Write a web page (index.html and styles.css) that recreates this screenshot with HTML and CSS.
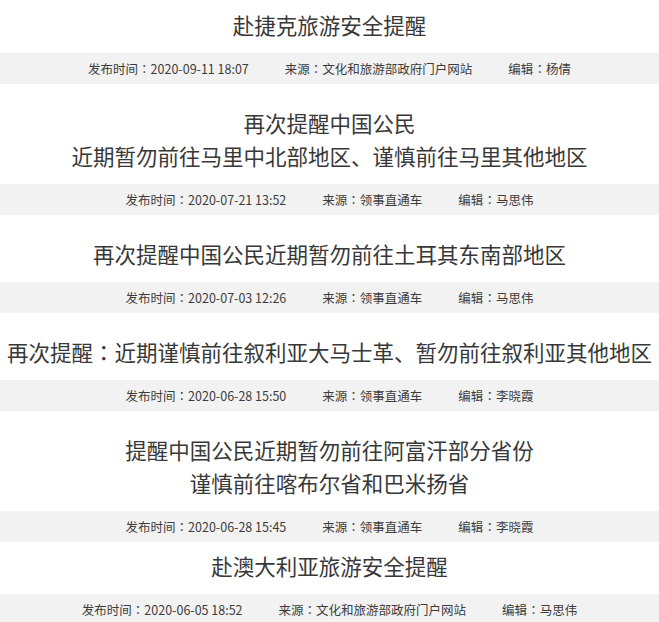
FILE: index.html
```html
<!DOCTYPE html>
<html lang="zh-CN">
<head>
<meta charset="utf-8">
<title>旅游安全提醒</title>
<link rel="stylesheet" href="styles.css">
</head>
<body>
<ul class="list">
  <li class="item item-first">
    <h2 class="title">赴捷克旅游安全提醒</h2>
    <div class="meta"><span>发布时间<span class="colon" lang="zh-TW">：</span>2020-09-11 18:07</span><span>来源<span class="colon" lang="zh-TW">：</span>文化和旅游部政府门户网站</span><span>编辑<span class="colon" lang="zh-TW">：</span>杨倩</span></div>
  </li>
  <li class="item">
    <h2 class="title">再次提醒中国公民<br>近期暂勿前往马里中北部地区、谨慎前往马里其他地区</h2>
    <div class="meta"><span>发布时间<span class="colon" lang="zh-TW">：</span>2020-07-21 13:52</span><span>来源<span class="colon" lang="zh-TW">：</span>领事直通车</span><span>编辑<span class="colon" lang="zh-TW">：</span>马思伟</span></div>
  </li>
  <li class="item">
    <h2 class="title">再次提醒中国公民近期暂勿前往土耳其东南部地区</h2>
    <div class="meta"><span>发布时间<span class="colon" lang="zh-TW">：</span>2020-07-03 12:26</span><span>来源<span class="colon" lang="zh-TW">：</span>领事直通车</span><span>编辑<span class="colon" lang="zh-TW">：</span>马思伟</span></div>
  </li>
  <li class="item">
    <h2 class="title">再次提醒<span class="colon" lang="zh-TW">：</span>近期谨慎前往叙利亚大马士革、暂勿前往叙利亚其他地区</h2>
    <div class="meta"><span>发布时间<span class="colon" lang="zh-TW">：</span>2020-06-28 15:50</span><span>来源<span class="colon" lang="zh-TW">：</span>领事直通车</span><span>编辑<span class="colon" lang="zh-TW">：</span>李晓霞</span></div>
  </li>
  <li class="item">
    <h2 class="title">提醒中国公民近期暂勿前往阿富汗部分省份<br>谨慎前往喀布尔省和巴米扬省</h2>
    <div class="meta"><span>发布时间<span class="colon" lang="zh-TW">：</span>2020-06-28 15:45</span><span>来源<span class="colon" lang="zh-TW">：</span>领事直通车</span><span>编辑<span class="colon" lang="zh-TW">：</span>李晓霞</span></div>
  </li>
  <li class="item item-tight">
    <h2 class="title">赴澳大利亚旅游安全提醒</h2>
    <div class="meta"><span>发布时间<span class="colon" lang="zh-TW">：</span>2020-06-05 18:52</span><span>来源<span class="colon" lang="zh-TW">：</span>文化和旅游部政府门户网站</span><span>编辑<span class="colon" lang="zh-TW">：</span>马思伟</span></div>
  </li>
</ul>
</body>
</html>
```

FILE: styles.css
```css
html, body {
  margin: 0;
  padding: 0;
  background: #ffffff;
}
body {
  font-family: "Noto Sans CJK SC", "Noto Sans", sans-serif;
  color: #333333;
  overflow: hidden;
}
.list {
  list-style: none;
  margin: 0;
  padding: 0;
}
.item {
  margin-top: 22px;
}
.item-first {
  margin-top: 8px;
}
.item-tight {
  margin-top: 7px;
}
.title {
  margin: 0 0 12px 0;
  font-size: 21.5px;
  font-weight: normal;
  line-height: 33px;
  text-align: center;
  color: #383838;
}
.colon {
  font-family: "Noto Sans CJK TC", "Noto Sans CJK SC", sans-serif;
}
.meta {
  background: #f2f2f2;
  height: 31px;
  display: flex;
  justify-content: center;
  align-items: center;
  gap: 36px;
  font-size: 12.5px;
  color: #3c3c3c;
}
```
